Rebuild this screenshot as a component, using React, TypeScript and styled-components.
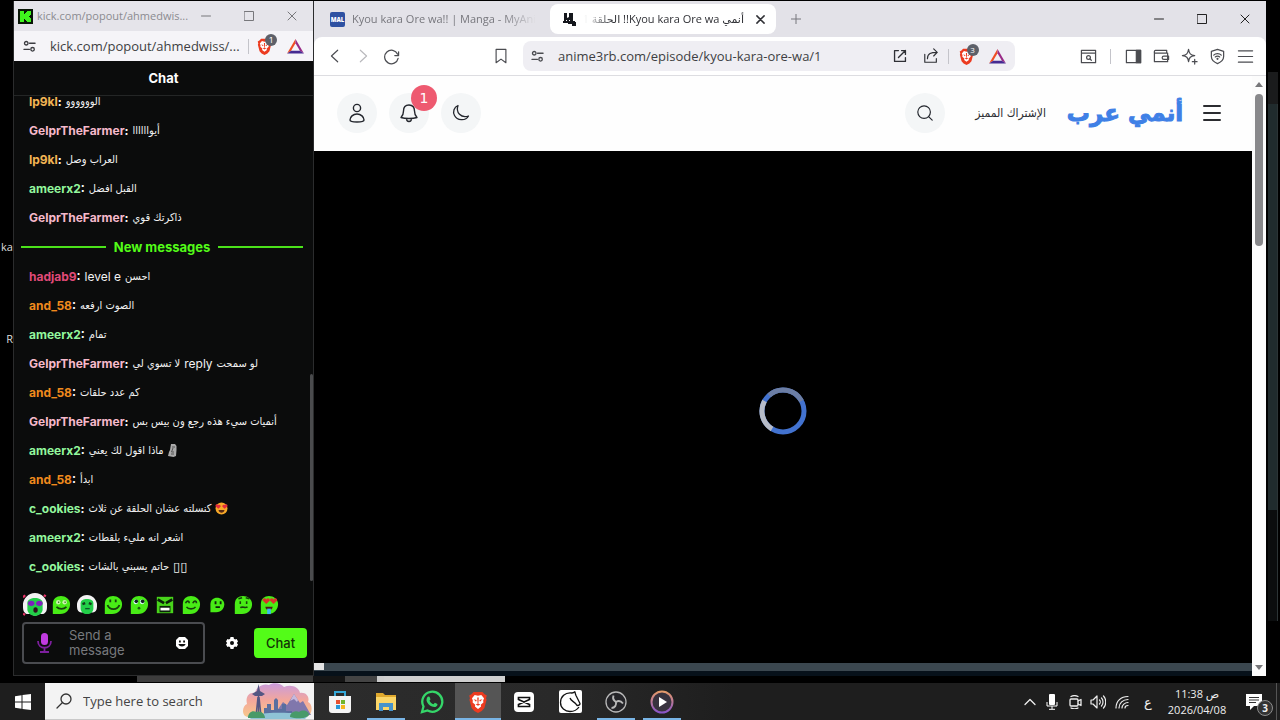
import React from "react";
import styled, { createGlobalStyle } from "styled-components";

const GlobalStyle = createGlobalStyle`
  *, *::before, *::after { box-sizing: border-box; }
  body { margin: 0; background: #000; font-family: "Open Sans", "DejaVu Sans", sans-serif; }
  button, input, textarea { font: inherit; margin: 0; padding: 0; border: 0; background: none; color: inherit; outline: none; }
  button { display: flex; align-items: center; justify-content: center; cursor: pointer; flex-shrink: 0; }
  svg { display: block; flex-shrink: 0; }
  p, h1, h2, ul { margin: 0; padding: 0; }
`;

/* ---------- desktop ---------- */
const Desktop = styled.div`
  height: 100vh;
  display: flex;
  flex-direction: column;
  background: #000;
  overflow: hidden;
`;
const Windows = styled.div`
  flex: 1;
  min-height: 0;
  display: flex;
  padding-top: 1px;
`;
const LeftEdge = styled.div`
  width: 13px;
  flex-shrink: 0;
  display: flex;
  flex-direction: column;
  align-items: flex-end;
  padding-top: 236px;
  gap: 72px;
  color: #ddd;
  font-size: 11px;
  line-height: 20px;
`;
const RightEdge = styled.div`
  width: 14px;
  padding: 71px 2px 55px;
  display: flex;
  flex-direction: column;
`;
const EdgeTop = styled.div`
  height: 32px;
  background: #1a1b1c;
`;
const EdgeBody = styled.div`
  flex: 1;
  background: linear-gradient(#202b2d 0 406px, #0b0d0e 406px);
  border-right: 1px solid #2c3436;
`;
const Wallpaper = styled.div`
  height: 7px;
  flex-shrink: 0;
  display: flex;
  padding: 0 0 1px 137px;
`;
const WallPiece = styled.div<{ $w: number; $c: string }>`
  width: ${(p) => p.$w}px;
  background: ${(p) => p.$c};
`;

/* ---------- shared window chrome ---------- */
const WindowButton = styled.button<{ $c: string }>`
  width: 43px;
  height: 30px;
  color: ${(p) => p.$c};
`;
const Divider = styled.span<{ $m: number }>`
  width: 1px;
  height: 15px;
  margin: 0 ${(p) => p.$m}px;
  background: #c4c4ca;
  flex-shrink: 0;
`;
const Shield = styled.span`
  position: relative;
  display: flex;
`;
const ShieldCount = styled.span`
  position: absolute;
  left: 9px;
  top: -4px;
  width: 12px;
  height: 12px;
  border-radius: 50%;
  background: #5d6069;
  color: #fff;
  font-size: 8px;
  line-height: 12px;
  text-align: center;
`;

/* ---------- chat window ---------- */
const ChatWindow = styled.section`
  width: 301px;
  flex-shrink: 0;
  display: flex;
  flex-direction: column;
  background: #0b0c0c;
  border: solid #2b2c2d;
  border-width: 0 1px 1px;
  font-family: Inter, "DejaVu Sans", sans-serif;
`;
const ChatTitleBar = styled.div`
  height: 30px;
  flex-shrink: 0;
  display: flex;
  align-items: center;
  padding-left: 4px;
  background: #e5e4ea;
`;
const ChatTitle = styled.span`
  flex: 1;
  min-width: 0;
  padding-left: 4px;
  font: 11px/18px "Open Sans", sans-serif;
  color: #8b8b90;
  white-space: nowrap;
`;
const ChatAddress = styled.div`
  height: 30px;
  flex-shrink: 0;
  display: flex;
  align-items: center;
  gap: 7px;
  padding: 0 9px;
  background: #f5f4f8;
  color: #3c3d42;
`;
const RewardsMark = styled.span`
  margin-left: 7px;
`;
const UrlInput = styled.input<{ $gap: number }>`
  flex: 1;
  min-width: 0;
  width: 0;
  margin-left: ${(p) => p.$gap}px;
  font-family: "Open Sans", sans-serif;
  font-size: 13px;
  line-height: 20px;
  color: #3e3f43;
`;
const ChatHeader = styled.h1`
  height: 35px;
  flex-shrink: 0;
  border-bottom: 1px solid #242626;
  color: #fff;
  font-size: 13px;
  line-height: 34px;
  text-align: center;
`;
const MessagePane = styled.div`
  flex: 1;
  min-height: 0;
  display: flex;
`;
const Messages = styled.ul`
  flex: 1;
  min-width: 0;
  display: flex;
  flex-direction: column;
  justify-content: flex-end;
  overflow: hidden;
  list-style: none;
`;
const Message = styled.li`
  height: 29px;
  flex-shrink: 0;
  display: flex;
  align-items: center;
  gap: 4px;
  padding-left: 15px;
  color: #f2f2f2;
  font-size: 12px;
  line-height: 20px;
  white-space: nowrap;
`;
const Name = styled.span`
  font-weight: 700;
  color: #fff;
`;
const NameColor = styled.span<{ $c: string }>`
  color: ${(p) => p.$c};
`;
const Body = styled.bdi`
  display: flex;
  align-items: center;
  gap: 4px;
`;
const Arabic = styled.span`
  font-family: "DejaVu Sans Condensed", "DejaVu Sans", sans-serif;
  font-size: 11px;
`;
const MissingGlyph = styled.span`
  font-family: "DejaVu Sans", sans-serif;
  font-size: 13px;
`;
const NewLine = styled.li`
  height: 30px;
  flex-shrink: 0;
  display: flex;
  align-items: center;
  gap: 8px;
  padding: 0 7px;
  color: #53fc18;
  font-size: 13px;
  font-weight: 700;
  &::before, &::after { content: ""; flex: 1; height: 2px; background: #4be31a; }
`;
const ScrollTrack = styled.div`
  width: 3px;
  display: flex;
  align-items: flex-end;
`;
const ScrollThumb = styled.div`
  width: 3px;
  height: 207px;
  border-radius: 2px;
  background: #4a4b4d;
`;
const Emotes = styled.div`
  height: 41px;
  flex-shrink: 0;
  display: flex;
  align-items: center;
  padding: 6px 0 0 8px;
`;
const EmoteButton = styled.button`
  width: 26px;
  height: 26px;
`;
const Composer = styled.form`
  height: 53px;
  flex-shrink: 0;
  display: flex;
  align-items: flex-start;
  padding: 0 6px 0 8px;
`;
const MessageBox = styled.div`
  flex: 1;
  min-width: 0;
  height: 42px;
  display: flex;
  align-items: center;
  padding: 0 15px 0 13px;
  border: 2px solid #4a4c50;
  border-radius: 4px;
  color: #fff;
`;
const MessageInput = styled.textarea`
  flex: 1;
  width: 0;
  min-width: 0;
  height: 30px;
  margin: 0 12px 0 17px;
  font-size: 13px;
  line-height: 15px;
  resize: none;
  overflow: hidden;
  &::placeholder { color: #77797d; opacity: 1; }
`;
const SettingsButton = styled.button`
  width: 49px;
  height: 42px;
  padding-left: 4px;
  color: #fff;
`;
const SendButton = styled.button`
  width: 53px;
  height: 30px;
  margin-top: 6px;
  border-radius: 4px;
  background: #53fc18;
  color: #123306;
  font-size: 13px;
  font-weight: 500;
`;

/* ---------- browser window ---------- */
const Browser = styled.section`
  flex: 1;
  min-width: 0;
  display: flex;
  flex-direction: column;
  background: #e3e2e8;
`;
const TabStrip = styled.div`
  height: 36px;
  flex-shrink: 0;
  display: flex;
  align-items: center;
  padding-left: 4px;
`;
const Tab = styled.div<{ $active?: boolean }>`
  width: ${(p) => (p.$active ? 226 : 232)}px;
  height: 30px;
  display: flex;
  align-items: center;
  gap: 7px;
  padding: 0 ${(p) => (p.$active ? 8 : 14)}px 0 12px;
  border-radius: 8px;
  background: ${(p) => (p.$active ? "#fff" : "transparent")};
  color: ${(p) => (p.$active ? "#303136" : "#77777d")};
  font-size: 11px;
  line-height: 18px;
`;
const TabTitle = styled.span<{ $fade: string }>`
  flex: 1;
  min-width: 0;
  overflow: hidden;
  white-space: nowrap;
  mask-image: linear-gradient(to ${(p) => p.$fade}, #000 82%, transparent);
`;
const TabClose = styled.button`
  width: 16px;
  height: 20px;
  margin-left: 1px;
`;
const NewTab = styled.button`
  width: 40px;
  height: 30px;
  color: #77777c;
`;
const Spacer = styled.span`
  flex: 1;
`;
const Toolbar = styled.div`
  height: 39px;
  flex-shrink: 0;
  display: flex;
  align-items: center;
  padding: 0 7px;
  background: #fff;
  border-bottom: 1px solid #dddde1;
  border-radius: 8px 8px 0 0;
  color: #4b4c51;
`;
const ToolButton = styled.button<{ $dim?: boolean }>`
  width: 28px;
  height: 30px;
  color: ${(p) => (p.$dim ? "#b9b9bd" : "inherit")};
`;
const AddressArea = styled.div`
  flex: 1;
  min-width: 0;
  display: flex;
  align-items: center;
  gap: 8px;
  margin: 0 59px 0 82px;
`;
const AddressPill = styled.div`
  flex: 1;
  min-width: 0;
  height: 30px;
  display: flex;
  align-items: center;
  padding: 0 4px 0 8px;
  border-radius: 8px;
  background: #efeef3;
`;
const PillIcons = styled.div`
  display: flex;
  align-items: center;
  gap: 3px;
  color: #2f3035;
`;
const Viewport = styled.div`
  flex: 1;
  min-height: 0;
  display: flex;
`;
const Page = styled.div`
  flex: 1;
  min-width: 0;
  display: flex;
  flex-direction: column;
  background: #000;
`;
const SiteHeader = styled.header`
  height: 75px;
  flex-shrink: 0;
  display: flex;
  align-items: center;
  gap: 12px;
  padding: 0 30px 2px 23px;
  background: #fefefe;
`;
const RoundButton = styled.button`
  position: relative;
  width: 40px;
  height: 40px;
  border-radius: 50%;
  background: #f4f6f7;
  color: #23262d;
`;
const Badge = styled.span`
  position: absolute;
  left: 22px;
  top: -8px;
  width: 26px;
  height: 26px;
  border-radius: 50%;
  background: #ee5a70;
  color: #fff;
  font: 14px/26px "DejaVu Sans", sans-serif;
  text-align: center;
`;
const PremiumLink = styled.a`
  margin-left: 18px;
  color: #2c2e33;
  font: 12px/20px "DejaVu Sans Condensed", "DejaVu Sans", sans-serif;
  text-decoration: none;
  white-space: nowrap;
`;
const Logo = styled.a`
  width: 114px;
  margin-left: 10px;
  display: flex;
  justify-content: center;
  color: #3f80e6;
  font: 700 23px/40px "DejaVu Sans", sans-serif;
  -webkit-text-stroke: 1px #3f80e6;
  text-decoration: none;
  white-space: nowrap;
`;
const MenuButton = styled.button`
  width: 20px;
  height: 40px;
  margin-left: 8px;
  color: #2b2c30;
`;
const Player = styled.main`
  flex: 1;
  display: flex;
  align-items: center;
  justify-content: center;
  padding-top: 8px;
`;
const SeekBar = styled.div`
  height: 13px;
  display: flex;
  background: linear-gradient(#3b474f 0 8px, #07111a 8px);
`;
const Played = styled.div`
  width: 10px;
  height: 7px;
  background: #e4e4e4;
`;
const Scrollbar = styled.div`
  width: 14px;
  display: flex;
  flex-direction: column;
  align-items: center;
  padding: 6px 0;
  background: #fcfcfc;
  color: #77777a;
`;
const PageThumb = styled.div`
  width: 8px;
  height: 152px;
  margin: 7px 0 auto;
  border-radius: 4px;
  background: #88888b;
`;

/* ---------- taskbar ---------- */
const Taskbar = styled.footer`
  height: 37px;
  flex-shrink: 0;
  display: flex;
  background: #1e1e1e;
  color: #eee;
`;
const StartButton = styled.button`
  width: 45px;
  height: 37px;
`;
const SearchBox = styled.label`
  width: 269px;
  display: flex;
  align-items: center;
  padding-left: 11px;
  background: #f3f3f3;
  border-bottom: 1px solid #c9c9c9;
  color: #333;
`;
const SearchInput = styled.input`
  flex: 1;
  min-width: 0;
  margin-left: 11px;
  font-size: 13px;
  line-height: 20px;
  &::placeholder { color: #444; opacity: 1; }
`;
const Apps = styled.div`
  flex: 1;
  display: flex;
  padding-left: 3px;
  background: linear-gradient(90deg, #2c2c2c, #292929 240px, #1e1e1e 420px);
`;
const AppButton = styled.button<{ $active?: boolean; $open?: boolean }>`
  width: 46px;
  height: 37px;
  background: ${(p) => (p.$active ? "#555" : "transparent")};
  background-image: ${(p) => (p.$open ? "linear-gradient(#79b5e6, #79b5e6)" : "none")};
  background-repeat: no-repeat;
  background-position: center bottom;
  background-size: ${(p) => (p.$active ? 46 : 38)}px 2px;
`;
const Tray = styled.div`
  display: flex;
  align-items: center;
  margin-right: 3px;
  border-right: 1px solid #555;
`;
const TrayButton = styled.button<{ $w: number }>`
  position: relative;
  width: ${(p) => p.$w}px;
  height: 37px;
  font-size: 13px;
`;
const Clock = styled.button`
  width: 70px;
  height: 37px;
  flex-direction: column;
  font-size: 11px;
  line-height: 16px;
`;
const NoticeCount = styled.span`
  position: absolute;
  left: 25px;
  top: 17px;
  width: 16px;
  height: 16px;
  border: 1px solid #8d8d8d;
  border-radius: 50%;
  background: #333;
  font-size: 10px;
  font-weight: 700;
  line-height: 14px;
`;

/* ---------- icons ---------- */
type IconProps = { size?: number; w?: number; vb?: number; children?: React.ReactNode };
const Line = ({ size = 18, w = 1, vb = 18, children }: IconProps) => (
  <svg width={size} height={size} viewBox={`0 0 ${vb} ${vb}`} fill="none" stroke="currentColor" strokeWidth={w} strokeLinecap="round" strokeLinejoin="round" aria-hidden="true">
    {children}
  </svg>
);
const Minimize = () => <Line size={10} vb={10}><path d="M0.5 5h9" /></Line>;
const Maximize = () => <Line size={10} vb={10}><path d="M.5.5h9v9h-9z" /></Line>;
const Close = ({ w = 1, size = 10 }: { w?: number; size?: number }) => <Line size={size} vb={10} w={w}><path d="M1 1l8 8M9 1L1 9" /></Line>;
const SiteInfo = () => (
  <Line size={13} vb={14} w={1.4}><circle cx="3.5" cy="3.5" r="1.9" /><path d="M7 3.5h6M1 10h6" /><circle cx="10.3" cy="10" r="1.9" /></Line>
);
const Lion = ({ size }: { size: number }) => (
  <svg width={size} height={size} viewBox="0 0 20 20" aria-hidden="true">
    <path fill="#ec3b20" d="M6 1h8l2 2 2 1-.7 2.5.5 1.5-2 7.5-2.4 2.6L10 20l-3.4-1.9-2.4-2.6L2.200 8l.5-1.500L2 4l2-1z" />
    <path fill="#fff" d="M10 4.300l3-.7 2.500 3-.8 2 .2 1.800-2.400 2 .3 1.600L10 16.300 7.200 14l.3-1.600-2.400-2 .2-1.800-.8-2 2.500-3z" />
    <path fill="#ec3b20" d="M6 7.500l2.800.7-.6 1.500zM14 7.500l-2.800.7.6 1.500zM9.300 6h1.400l-.3 5h-.8zM8 12.200l2-1 2 1-2 1.300z" />
  </svg>
);
const Bat = () => (
  <svg width="17" height="15" viewBox="0 0 18 16" aria-hidden="true">
    <path fill="#f04e23" d="M9 0v4.500L4.300 12.600 0 15.500z" />
    <path fill="#982a86" d="M9 0l9 15.500-4.300-2.900L9 4.500z" />
    <path fill="#452a91" d="M0 15.500l4.300-2.900h9.400l4.300 2.900z" />
  </svg>
);
const BraveShield = ({ count }: { count: string }) => (
  <Shield><Lion size={17} /><ShieldCount>{count}</ShieldCount></Shield>
);
const KickMark = () => (
  <svg width="15" height="15" viewBox="0 0 15 15" aria-hidden="true">
    <path d="M0 0h15v15H0z" fill="#091606" />
    <path fill="#3ff51d" d="M2 2h4v3h1V4h1V3h1V2h4v4h-1v1h-1v1h1v1h1v4H9v-1H8v-1H7v-1H6v3H2z" />
  </svg>
);
const Moai = () => (
  <svg width="9" height="13" viewBox="0 0 9 13" aria-hidden="true">
    <path fill="#aaa" d="M3 0h4l1.500 2v4L8 12 5.500 13 0 12l1-4 1-2z" />
    <path stroke="#555" fill="none" d="M4 3h3M5 4l-1.500 4H6M3 10h3" />
  </svg>
);
const HeartEyes = () => (
  <svg width="13" height="13" viewBox="0 0 13 13" aria-hidden="true">
    <circle cx="6.500" cy="6.500" r="6" fill="#f7a928" />
    <path fill="#e22b3c" d="M3.300 6.800L.5 4.300C0 2.300 2.300 1.700 3.200 3c1.300-1 3 .2 2.400 1.800zM9.700 6.800l2.800-2.500C13 2.300 10.700 1.700 9.800 3c-1.300-1-3 .2-2.400 1.800z" />
    <path fill="#5a2a12" d="M3.500 8h6c-.5 3.500-5.500 3.500-6 0z" />
  </svg>
);

const BLOB = "M3 21V10C3 4 7 1 12 1s10 3.500 10 9-4 11-11 11z";
type EmoteKind = "party" | "smirk" | "headset" | "smile" | "look" | "angry" | "happy" | "small" | "worry" | "love";
const Emote = ({ kind }: { kind: EmoteKind }) => {
  const size = kind === "party" ? 24 : kind === "small" ? 16 : 20;
  const headset = kind === "party" || kind === "headset";
  return (
    <svg width={size} height={size} viewBox="1 0 22 22" aria-hidden="true">
      {headset && <path d="M1 13C0 8 4 0 12 0s12 8 11 13c0 5-3 7-6 6l-5 2-5-2c-3 1-6-1-6-6z" fill="#f3f3f3" />}
      {headset && <path d="M5 15V9c0-6 14-6 14 0v6c0 3-3 6-7 6s-7-3-7-6z" fill="#22cf49" />}
      {!headset && kind !== "angry" && <path d={BLOB} fill="#48ec16" />}
      {kind === "angry" && <path d="M3 2h18v18H3z" fill="#48d51b" />}
      {kind === "party" && (
        <g><ellipse cx="8.500" cy="9.500" rx="3" ry="2.500" fill="#7e21bd" /><ellipse cx="16" cy="9.500" rx="3" ry="2.500" fill="#7e21bd" /><ellipse cx="12.500" cy="15.500" rx="2" ry="2.500" fill="#30101d" /><path d="M1 4l2-2M1 19l2 1M20 2l2 1" stroke="#ed356b" strokeWidth="2" /></g>
      )}
      {kind === "headset" && (
        <g><path d="M7 10l3-1M14 9l3 1" stroke="#143a1a" strokeWidth="2.500" /><path d="M10 15h5" stroke="#0a5927" strokeWidth="1.500" /></g>
      )}
      {kind === "smirk" && (
        <g><circle cx="9" cy="8" r="2.500" fill="#c6f3a9" /><circle cx="16" cy="8" r="2.500" fill="#c6f3a9" /><path d="M9 8h1M16 8h1M7 13c3 3 8 3 11 0" stroke="#173f0c" strokeWidth="1.800" fill="none" /></g>
      )}
      {kind === "smile" && <path d="M9 5v3M15 5v3M6 11c2 6 11 6 13 0" stroke="#173f0c" strokeWidth="2" fill="none" />}
      {kind === "look" && (
        <g><circle cx="8.500" cy="7.500" r="2.600" fill="#dff" /><circle cx="15.500" cy="7.500" r="2.600" fill="#dff" /><circle cx="9" cy="7" r="2" fill="#122" /><circle cx="16" cy="7" r="2" fill="#122" /><circle cx="12" cy="14.500" r="1.500" fill="#195c10" /></g>
      )}
      {kind === "angry" && (
        <g><path d="M4 5l7 4M20 5l-7 4" stroke="#0c220a" strokeWidth="3" /><path d="M6 12h12v7H6z" fill="#0c220a" /><path d="M7 14h10v3H7z" fill="#fff" /></g>
      )}
      {kind === "happy" && <path d="M6 9c1-3 4-3 4 0M14 9c1-3 4-3 4 0M7 13c2 3 8 3 10 0" stroke="#173f0c" strokeWidth="1.700" fill="none" />}
      {kind === "small" && <path d="M10 6v4M17 6v4M10 14h6" stroke="#0c220a" strokeWidth="2.500" />}
      {kind === "worry" && <path d="M7 4l4-1M15 3l4 1M9 7v3M16 7v3M9 14c3-2 5 1 8-1" stroke="#173f0c" strokeWidth="1.700" fill="none" />}
      {kind === "love" && (
        <g><path d="M9 10L5 6c0-3 3-3 4-1 1-2 4-2 4 1zM17 10l-4-4c0-3 3-3 4-1 1-2 4-2 4 1z" fill="#d8342c" /><path d="M8 13h8c0 5-8 5-8 0" fill="#4d1b16" /><path d="M10 15h4v6h-4z" fill="#3bb8f2" /></g>
      )}
    </svg>
  );
};

const Landscape = () => (
  <svg width="72" height="36" viewBox="0 0 72 36" aria-hidden="true">
    <defs>
      <linearGradient id="sky" x1="0" y1="0" x2="0" y2="1"><stop offset="0" stopColor="#c99bdc" /><stop offset=".5" stopColor="#f3a79c" /><stop offset="1" stopColor="#f8c88a" /></linearGradient>
    </defs>
    <path fill="url(#sky)" d="M6 34C-1 33 0 23 5 21 3 13 8 9 13 10 14 4 21 0 27 2c4-3 12-2 15 2 7-3 15 0 16 6 6-1 10 4 8 9 5 2 5 12-1 15z" />
    <path fill="#8077ac" d="M32 32l9-13 4 3 7-11 6 9 3-2 8 14z" />
    <path fill="#c7b9dc" d="M52 11l-4 7 4-2 3 3 1-2z" />
    <path fill="#5a6f9f" d="M22 33v-8h3v-4h4v6h3V17l2-2 2 2v9h4v-5h4v7h6v5z" />
    <path fill="#8fc3d6" d="M5 33c14-4 47-4 62-1l-4 4H9z" />
    <path stroke="#545683" strokeWidth="1.500" d="M16.500 10v23M14 33l2-19M19 33l-2-19" fill="none" />
    <path fill="#545683" d="M10 11l5-3 1.500-7L18 8l5 3-3 2h-7z" />
    <path fill="#489a69" d="M6 35c0-6 5-8 8-6 5-2 9 2 9 6zM48 34c0-5 6-7 9-5 4-3 10-1 10 3-3 4-13 4-19 2z" />
  </svg>
);

/* ---------- data ---------- */
const GOLD = "#f2b453";
const PINK = "#f6b9cb";
const GREEN = "#93f79d";
const ORANGE = "#f08a1d";

type Chat = { name: string; color: string; text: string; latin?: boolean; lead?: React.ReactNode };
const before: Chat[] = [
  { name: "lp9kl", color: GOLD, text: "الوووووو" },
  { name: "GelprTheFarmer", color: PINK, text: "أيواااااا" },
  { name: "lp9kl", color: GOLD, text: "العراب وصل" },
  { name: "ameerx2", color: GREEN, text: "القبل افضل" },
  { name: "GelprTheFarmer", color: PINK, text: "ذاكرتك قوي" },
];
const after: Chat[] = [
  { name: "hadjab9", color: "#e04a78", text: "احسن", latin: true },
  { name: "and_58", color: ORANGE, text: "الصوت ارفعه" },
  { name: "ameerx2", color: GREEN, text: "تمام" },
  { name: "GelprTheFarmer", color: PINK, text: "لو سمحت reply لا تسوي لي" },
  { name: "and_58", color: ORANGE, text: "كم عدد حلقات" },
  { name: "GelprTheFarmer", color: PINK, text: "أنميات سيء هذه رجع ون بيس بس" },
  { name: "ameerx2", color: GREEN, text: "ماذا اقول لك يعني", lead: <Moai /> },
  { name: "and_58", color: ORANGE, text: "ابدأ" },
  { name: "c_ookies", color: GREEN, text: "كنسلته عشان الحلقة عن ثلاث", lead: <HeartEyes /> },
  { name: "ameerx2", color: GREEN, text: "اشعر انه مليء بلقطات" },
  { name: "c_ookies", color: GREEN, text: "حاتم يسبني بالشات", lead: <MissingGlyph>▯▯</MissingGlyph> },
];
const emotes: EmoteKind[] = ["party", "smirk", "headset", "smile", "look", "angry", "happy", "small", "worry", "love"];

const ChatLine = ({ name, color, text, latin, lead }: Chat) => {
  const parts = text.split("reply");
  return (
    <Message>
      <Name><NameColor $c={color}>{name}</NameColor>:</Name>
      <Body dir={latin ? "ltr" : "rtl"}>
        {lead}
        {latin && <span>level e</span>}
        <Arabic>{parts[0]}</Arabic>
        {parts.length > 1 && <span>reply</span>}
        {parts.length > 1 && <Arabic>{parts[1]}</Arabic>}
      </Body>
    </Message>
  );
};

const ChatPanel = () => (
  <ChatWindow>
    <ChatTitleBar>
      <KickMark />
      <ChatTitle>kick.com/popout/ahmedwis...</ChatTitle>
      <WindowButton $c="#77777b" aria-label="Minimize"><Minimize /></WindowButton>
      <WindowButton $c="#77777b" aria-label="Maximize"><Maximize /></WindowButton>
      <WindowButton $c="#77777b" aria-label="Close"><Close /></WindowButton>
    </ChatTitleBar>
    <ChatAddress>
      <SiteInfo />
      <UrlInput $gap={7} aria-label="Address" defaultValue="kick.com/popout/ahmedwiss/..." />
      <Divider $m={0} />
      <BraveShield count="1" />
      <RewardsMark><Bat /></RewardsMark>
    </ChatAddress>
    <ChatHeader>Chat</ChatHeader>
    <MessagePane>
      <Messages>
        {before.map((m, i) => <ChatLine key={i} {...m} />)}
        <NewLine>New messages</NewLine>
        {after.map((m, i) => <ChatLine key={i} {...m} />)}
      </Messages>
      <ScrollTrack><ScrollThumb /></ScrollTrack>
    </MessagePane>
    <Emotes>
      {emotes.map((k) => <EmoteButton key={k} aria-label={k}><Emote kind={k} /></EmoteButton>)}
    </Emotes>
    <Composer onSubmit={(e) => e.preventDefault()}>
      <MessageBox>
        <svg width="15" height="20" viewBox="0 0 15 20" aria-hidden="true">
          <rect x="4" y="0" width="7" height="12" rx="3.500" fill="#c13be0" />
          <path d="M1 8c0 9 13 9 13 0M7.500 15v4M3 19h9" stroke="#7d1f9e" strokeWidth="1.800" fill="none" />
        </svg>
        <MessageInput aria-label="Message" placeholder="Send a message" />
        <button type="button" aria-label="Emotes">
          <svg width="12" height="12" viewBox="0 0 12 12" aria-hidden="true">
            <path fill="#fff" d="M3 0h6l3 3v6l-3 3H3L0 9V3z" />
            <path fill="#111" d="M3 3.500h1.800v2H3zM7.200 3.500H9v2H7.200zM2.500 7h7c0 3.300-7 3.300-7 0z" />
          </svg>
        </button>
      </MessageBox>
      <SettingsButton type="button" aria-label="Settings">
        <svg width="12" height="12" viewBox="0 0 12 12" aria-hidden="true">
          <path fill="#fff" fillRule="evenodd" d="M4.500 0h3l.4 1.700 1.200.7 1.600-.5 1.300 2.500L10.800 6l1.200 1.500-1.400 2.600-1.600-.5-1.100.7-.4 1.700h-3l-.4-1.700-1.200-.7-1.500.5L0 7.500 1.200 6 0 4.500 1.400 1.900l1.500.5 1.200-.7zM6 4a2 2 0 100 4 2 2 0 000-4z" />
        </svg>
      </SettingsButton>
      <SendButton type="submit">Chat</SendButton>
    </Composer>
  </ChatWindow>
);

const BrowserWindow = () => (
  <Browser>
    <TabStrip>
      <Tab>
        <svg width="15" height="15" viewBox="0 0 15 15" aria-hidden="true">
          <rect width="15" height="15" rx="2" fill="#2e51a2" />
          <text x="7.500" y="10" fill="#fff" fontSize="6" fontWeight="800" textAnchor="middle" fontFamily="Open Sans">MAL</text>
        </svg>
        <TabTitle $fade="right">Kyou kara Ore wa!! | Manga - MyAnim</TabTitle>
      </Tab>
      <Tab $active>
        <svg width="15" height="15" viewBox="0 0 15 15" aria-hidden="true">
          <path fill="#15171d" d="M2 1h3v5l2-1V1h4v8h2v1h1v4h-4v-2H6v-1H1V9h1z" />
          <path fill="#fff" d="M4 8h1v1H4zM7 8h1v1H7z" />
        </svg>
        <TabTitle $fade="left" dir="rtl">أنمي Kyou kara Ore wa!! الحلقة 1</TabTitle>
        <TabClose aria-label="Close tab"><Close w={1.700} size={9} /></TabClose>
      </Tab>
      <NewTab aria-label="New tab"><Line size={10} vb={10}><path d="M5 0v10M0 5h10" /></Line></NewTab>
      <Spacer />
      <WindowButton $c="#222" aria-label="Minimize"><Minimize /></WindowButton>
      <WindowButton $c="#222" aria-label="Maximize"><Maximize /></WindowButton>
      <WindowButton $c="#222" aria-label="Close"><Close /></WindowButton>
    </TabStrip>
    <Toolbar>
      <ToolButton aria-label="Back"><Line size={16} w={1.300}><path d="M12 2.500L5 9l7 6.500" /></Line></ToolButton>
      <ToolButton aria-label="Forward" $dim><Line size={16} w={1.300}><path d="M6 2.500L13 9l-7 6.500" /></Line></ToolButton>
      <ToolButton aria-label="Reload"><Line size={17} w={1.300}><path d="M15.500 6.500A7.200 7.200 0 1016 11M16.500 4v4h-4" /></Line></ToolButton>
      <AddressArea>
        <ToolButton aria-label="Bookmark"><Line size={16} w={1.300}><path d="M3.500 1.500h11v15L9 12.500l-5.500 4z" /></Line></ToolButton>
        <AddressPill>
          <SiteInfo />
          <UrlInput $gap={14} aria-label="Address" defaultValue="anime3rb.com/episode/kyou-kara-ore-wa/1" />
          <PillIcons>
            <ToolButton aria-label="Open in app"><Line size={14} w={1.700}><path d="M7 2H2v14h14v-5M11 2h5v5M16 2L7 11" /></Line></ToolButton>
            <ToolButton aria-label="Share"><Line size={16} w={1.300}><path d="M2 7v9h13v-4M5 12c0-6 4-7 11-7M12 1l4 4-4 4" /></Line></ToolButton>
            <Divider $m={0} />
            <ToolButton aria-label="Shields"><BraveShield count="3" /></ToolButton>
            <ToolButton aria-label="Rewards"><Bat /></ToolButton>
          </PillIcons>
        </AddressPill>
      </AddressArea>
      <ToolButton aria-label="Search tabs"><Line size={17} w={1.300}><path d="M1.500 2.500h15v13h-15zM1.500 5.500h15" /><circle cx="9" cy="10" r="2" /><path d="M10.500 11.500L12 13" /></Line></ToolButton>
      <Divider $m={8} />
      <ToolButton aria-label="Sidebar"><Line size={17} w={1.300}><path d="M1.500 2.500h15v13h-15z" /><path fill="currentColor" d="M12 2.500h4.500v13H12z" /></Line></ToolButton>
      <ToolButton aria-label="Wallet"><Line size={17} w={1.300}><path d="M1.500 4V14.500h14V5.500h-13c-2 0-1-3 0-3h12v3M16.500 8.500h-5a1.800 1.800 0 000 3.600h5z" /></Line></ToolButton>
      <ToolButton aria-label="Assistant"><Line size={17} w={1.300}><path d="M8 1.500c.7 4.500 2 5.800 6.500 6.500-4.500.7-5.800 2-6.500 6.500C7.300 10 6 8.700 1.500 8 6 7.300 7.300 6 8 1.500zM14.500 12v5M12 14.500h5" /></Line></ToolButton>
      <ToolButton aria-label="VPN"><Line size={17} w={1.300}><path d="M9 1.500l6.500 2v5.500c0 3.500-3 6-6.500 7.500C5.500 15 2.500 12.500 2.500 9V3.500zM5 7.500c2-2 6-2 8 0M6.700 9.500c1.200-1.200 3.400-1.200 4.600 0" /><circle cx="9" cy="11.500" r=".5" /></Line></ToolButton>
      <ToolButton aria-label="Menu"><Line size={17} w={1.300}><path d="M1.500 3h15M1.500 9h15M1.500 15h15" /></Line></ToolButton>
    </Toolbar>
    <Viewport>
      <Page>
        <SiteHeader>
          <RoundButton aria-label="Account"><Line size={20} vb={20} w={1.400}><circle cx="10" cy="5" r="3.600" /><path d="M10 11c-4 0-7 3-7 6 0 1 1 2 7 2s7-1 7-2c0-3-3-6-7-6z" /></Line></RoundButton>
          <RoundButton aria-label="Notifications">
            <Line size={20} vb={20} w={1.400}><path d="M10 2C6 2 4.500 5 4.500 8c0 3.500-1 5-2.500 6.500 4 1.300 12 1.300 16 0C16.500 13 15.500 11.500 15.500 8c0-3-1.500-6-5.500-6zM7.500 15.500c0 4 5 4 5 0" /></Line>
            <Badge>1</Badge>
          </RoundButton>
          <RoundButton aria-label="Dark mode"><Line size={20} vb={20} w={1.300}><path d="M7 2.500C3 4 1.500 9 3.500 12.500c2.500 5 11 6 14 .5C10 15.500 4.500 9.500 7 2.500z" /></Line></RoundButton>
          <Spacer />
          <RoundButton aria-label="Search"><Line size={18} vb={20} w={1.300}><circle cx="9" cy="9" r="7" /><path d="M14 14l4 4" /></Line></RoundButton>
          <PremiumLink href="#premium" dir="rtl">الإشتراك المميز</PremiumLink>
          <Logo href="#home" dir="rtl">أنمي عرب</Logo>
          <MenuButton aria-label="Site menu"><Line size={20} vb={20} w={2}><path d="M2 3h16M2 10h16M2 17h16" /></Line></MenuButton>
        </SiteHeader>
        <Player>
          <svg width="48" height="48" viewBox="0 0 48 48" fill="none" strokeWidth="5" role="img" aria-label="Loading">
            <circle cx="24" cy="24" r="21" stroke="#4272cf" />
            <path d="M10 8.400A21 21 0 0142.500 14" stroke="#6c7ea5" />
            <path d="M5.500 14A21 21 0 0013 42" stroke="#b7bcc8" />
          </svg>
        </Player>
        <SeekBar><Played /></SeekBar>
      </Page>
      <Scrollbar>
        <svg width="8" height="5" viewBox="0 0 8 5" aria-hidden="true"><path d="M4 0l4 5H0z" fill="currentColor" /></svg>
        <PageThumb />
        <svg width="8" height="5" viewBox="0 0 8 5" aria-hidden="true"><path d="M0 0h8L4 5z" fill="currentColor" /></svg>
      </Scrollbar>
    </Viewport>
  </Browser>
);

const SystemBar = () => (
  <Taskbar>
    <StartButton aria-label="Start">
      <svg width="16" height="16" viewBox="0 0 16 16" aria-hidden="true"><path fill="#fff" d="M0 2.300l6.500-1v6.200H0zM7.500 1.100L16 0v7.500H7.500zM0 8.500h6.500v6.200l-6.500-1zM7.500 8.500H16V16l-8.500-1.100z" /></svg>
    </StartButton>
    <SearchBox>
      <Line size={16} vb={16} w={1.300}><circle cx="10" cy="6" r="5" /><path d="M6.500 9.500L1 15" /></Line>
      <SearchInput placeholder="Type here to search" aria-label="Search" />
      <Landscape />
    </SearchBox>
    <Apps>
      <AppButton aria-label="Store">
        <svg width="24" height="24" viewBox="0 0 24 24" aria-hidden="true">
          <path d="M7 6V2h10v4" stroke="#35a8d8" strokeWidth="2" fill="none" /><path d="M1 6h22v14q0 3-3 3H4q-3 0-3-3z" fill="#f4f4f4" />
          <path fill="#e8502f" d="M8 10h4v4H8z" /><path fill="#70b52c" d="M13 10h4v4h-4z" /><path fill="#2797d8" d="M8 15h4v4H8z" /><path fill="#f5b61d" d="M13 15h4v4h-4z" />
        </svg>
      </AppButton>
      <AppButton aria-label="File Explorer" $open>
        <svg width="22" height="20" viewBox="0 0 22 20" aria-hidden="true">
          <path fill="#e0a92e" d="M1 1h7l2 2h11v5H1z" /><path fill="#fbd668" d="M1 5h20v13H1z" /><path fill="#4793ca" d="M4 11h14v8h-4v-4H8v4H4z" />
        </svg>
      </AppButton>
      <AppButton aria-label="WhatsApp">
        <svg width="24" height="24" viewBox="0 0 24 24" aria-hidden="true">
          <path d="M2 22l1.500-5.500A10 10 0 117.500 20.500z" fill="none" stroke="#35d669" strokeWidth="2.300" />
          <path fill="#35d669" d="M8 6.500l1.500.2 1 2.600-1 1.400c1 1.800 2.200 2.800 4 3.500l1.400-1.500 2.600 1.200c0 3-3 3.700-5.500 2.600-3-1.200-5-3.500-5.500-6 0-2 .5-3.200 1.500-4z" />
        </svg>
      </AppButton>
      <AppButton aria-label="Brave" $active $open><Lion size={22} /></AppButton>
      <AppButton aria-label="CapCut">
        <svg width="20" height="20" viewBox="0 0 20 20" aria-hidden="true">
          <rect width="20" height="20" rx="4" fill="#fff" /><path d="M15.500 7.500v-2h-11v2l11 5v2h-11v-2l11-5z" fill="none" stroke="#111" strokeWidth="1.700" />
        </svg>
      </AppButton>
      <AppButton aria-label="Lichess">
        <svg width="23" height="23" viewBox="0 0 23 23" aria-hidden="true">
          <rect width="23" height="23" rx="2" fill="#fff" />
          <path d="M16 1.500c-1 1-1.500 1.500-3 1.500C6 2 1.500 7 1.500 12.500c0 5.500 4.500 9 9.500 9 4 0 7-1.500 9-4.500M16 1.500c0 2 .5 2.500 1 4l4 8c0 1.500-1.500 2-3 2-2-4-6-4-7-7.500" fill="none" stroke="#111" strokeWidth="1.300" strokeLinejoin="round" />
        </svg>
      </AppButton>
      <AppButton aria-label="OBS" $open>
        <svg width="22" height="22" viewBox="0 0 22 22" fill="none" stroke="#b9b9b9" strokeWidth="1.300" aria-hidden="true">
          <circle cx="11" cy="11" r="10" fill="#252529" />
          <path strokeWidth="1.900" d="M8.500 4.500c-1 3 0 5 2.500 6.500M18 12.500c-2-2.500-4.500-3-7-1.500M6.500 17c3.500 0 5-3 4.500-6" />
        </svg>
      </AppButton>
      <AppButton aria-label="Media Player" $open>
        <svg width="24" height="24" viewBox="0 0 24 24" aria-hidden="true">
          <defs><linearGradient id="ring" x1="0" y1="0" x2="0" y2="1"><stop offset="0" stopColor="#e59a6a" /><stop offset="1" stopColor="#8a55c8" /></linearGradient></defs>
          <circle cx="12" cy="12" r="10.500" fill="#38323e" stroke="url(#ring)" strokeWidth="2" /><path fill="#fff" d="M9 7l8 5-8 5z" />
        </svg>
      </AppButton>
    </Apps>
    <Tray>
      <TrayButton $w={22} aria-label="Hidden icons"><Line size={12} vb={12} w={1.300}><path d="M1 8.500l5-5 5 5" /></Line></TrayButton>
      <TrayButton $w={21} aria-label="Microphone">
        <svg width="12" height="16" viewBox="0 0 12 16" aria-hidden="true"><rect x="3" width="6" height="11" rx="1" fill="#fff" /><path d="M1 8v4h10V8M6 12v3M3 15.300h6" stroke="#fff" fill="none" /></svg>
      </TrayButton>
      <TrayButton $w={25} aria-label="Camera"><Line size={14} vb={14} w={1.300}><rect x="2" y="4" width="8" height="7" rx="1" /><path d="M10 6l3-1.500v6L10 9M3 1.500c2-1 5-1 7 0M3 13c2 1 5 1 7 0" /></Line></TrayButton>
      <TrayButton $w={22} aria-label="Volume"><Line size={16} vb={16} w={1.200}><path d="M1 6h2l4-4v12l-4-4H1zM9.500 6c1 1 1 3 0 4M11.500 4c2 2 2 6 0 8M13.500 2c3 3 3 9 0 12" /></Line></TrayButton>
      <TrayButton $w={25} aria-label="Network"><Line size={14} vb={14} w={1.200}><path d="M1 13C1 6 6 1.500 13 1.500M4 13c0-5 4-8.500 9-8.500M7 13c0-3 3-5.500 6-5.500M10 13c0-1.500 1.500-2.500 3-2.500" /></Line></TrayButton>
      <TrayButton $w={28} aria-label="Input language">ع</TrayButton>
      <Clock><span>11:38 ص</span><span>2026/04/08</span></Clock>
      <TrayButton $w={44} aria-label="Notifications">
        <svg width="16" height="16" viewBox="0 0 16 16" aria-hidden="true"><path fill="#fff" d="M0 0h16v12H8l-4 4v-4H0z" /><path stroke="#333" d="M3 3.500h10M3 6h10M3 8.500h7" /></svg>
        <NoticeCount>3</NoticeCount>
      </TrayButton>
    </Tray>
  </Taskbar>
);

export default function App() {
  return (
    <>
      <GlobalStyle />
      <Desktop>
        <Windows>
          <LeftEdge><span>ka</span><span>R</span></LeftEdge>
          <ChatPanel />
          <BrowserWindow />
          <RightEdge><EdgeTop /><EdgeBody /></RightEdge>
        </Windows>
        <Wallpaper>
          <WallPiece $w={176} $c="#3d3d3d" />
          <WallPiece $w={32} $c="#151515" />
          <WallPiece $w={32} $c="#444" />
          <WallPiece $w={7} $c="#ccc" />
          <WallPiece $w={121} $c="#cfcfcf" />
        </Wallpaper>
        <SystemBar />
      </Desktop>
    </>
  );
}
